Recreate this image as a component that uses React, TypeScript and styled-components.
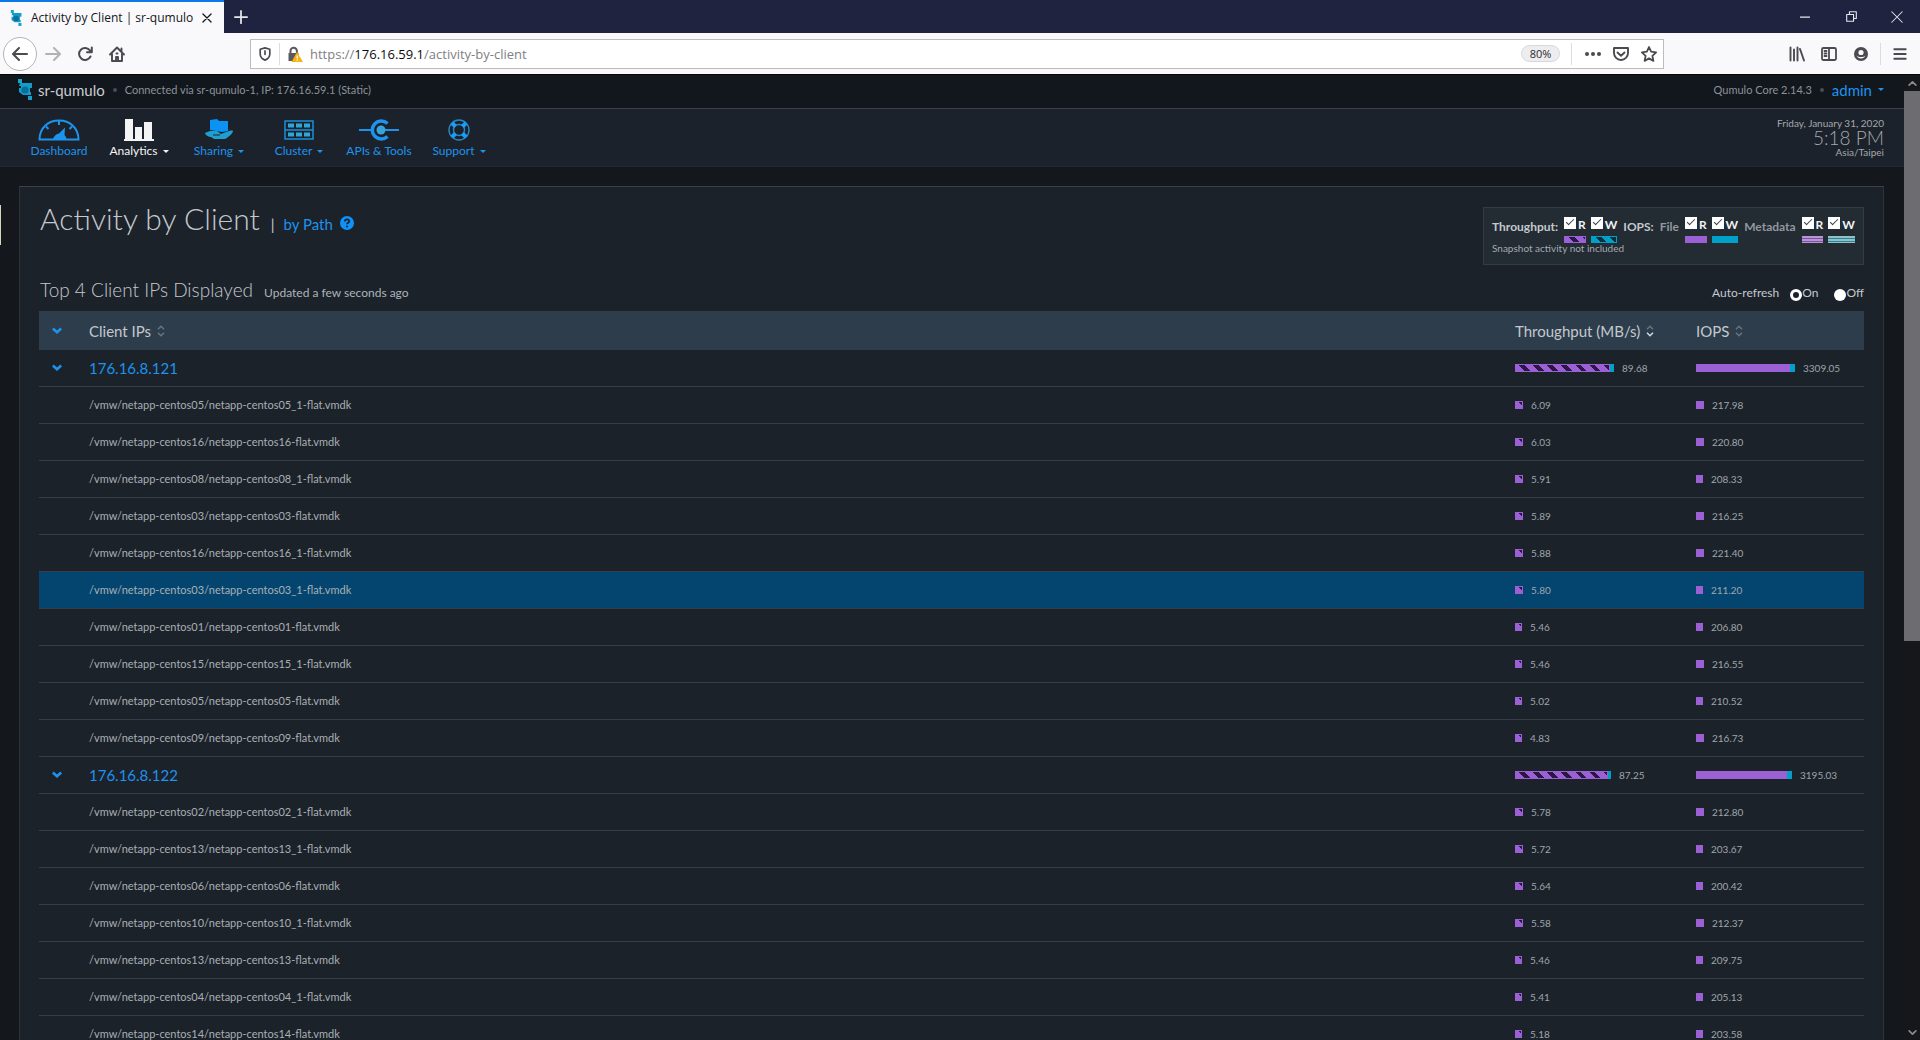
import React from "react";
import styled, { createGlobalStyle, css } from "styled-components";

const color = {
  blue: "#1c93ee",
  purple: "#9a60d4",
  purpleDark: "#2b1746",
  cyan: "#00a0c8",
  cyanDark: "#06303e",
  text: "#c3c9ce",
  muted: "#8b9298",
  panel: "#1c222a",
  line: "#363d46",
};

const GlobalStyle = createGlobalStyle`
  *, *::before, *::after { box-sizing: border-box; }
  body { margin: 0; background: #14171b; }
  button { font: inherit; color: inherit; background: none; border: 0; padding: 0; cursor: pointer; }
  a { text-decoration: none; }
  svg { display: block; flex: none; }
`;

const Window = styled.div`
  display: flex;
  flex-direction: column;
  height: 100vh;
  overflow: hidden;
  font-family: "Open Sans", "Noto Sans", sans-serif;
`;

/* ---------- Browser chrome ---------- */

const TabStrip = styled.div`
  display: flex;
  align-items: stretch;
  flex: none;
  height: 33px;
  background: #202340;
  color: #e6e6ee;
`;

const Tab = styled.div`
  display: flex;
  align-items: center;
  width: 224px;
  padding: 0 12px 0 10px;
  gap: 8px;
  border-top: 2px solid #0a78e6;
  background: #f9f9fb;
  color: #15151a;
  font-size: 12px;
  white-space: nowrap;
`;

const TabTitle = styled.span`
  flex: 1;
`;

const NewTab = styled.button`
  display: grid;
  place-items: center;
  width: 34px;
`;

const WindowButtons = styled.div`
  display: flex;
  margin-left: auto;
`;

const WindowButton = styled.button`
  display: grid;
  place-items: center;
  width: 46px;
`;

const Toolbar = styled.div`
  display: flex;
  align-items: center;
  flex: none;
  height: 42px;
  padding: 0 4px 0 3px;
  background: #f9f9fb;
  border-bottom: 1px solid #050608;
  color: #4a4a4f;
`;

const NavButtons = styled.div`
  display: flex;
  align-items: center;
  width: 247px;
`;

const BackButton = styled.button`
  display: grid;
  place-items: center;
  width: 34px;
  height: 34px;
  border: 1px solid #b4b4b8;
  border-radius: 50%;
  background: #fff;
`;

const ToolButton = styled.button<{ $dim?: boolean }>`
  display: grid;
  place-items: center;
  width: 32px;
  height: 32px;
  opacity: ${(p) => (p.$dim ? 0.4 : 1)};
`;

const UrlBar = styled.div`
  display: flex;
  align-items: center;
  flex: 1;
  height: 30px;
  padding: 0 0 0 7px;
  border: 1px solid #bcbcc0;
  background: #fff;
`;

const UrlText = styled.div`
  flex: 1;
  padding-left: 7px;
  font-size: 13px;
  color: #808085;
  b {
    font-weight: 400;
    color: #0c0c0d;
  }
`;

const Divider = styled.span<{ $gap?: number }>`
  width: 1px;
  height: 22px;
  margin: 0 ${(p) => p.$gap ?? 8}px;
  background: #dcdce0;
`;

const ZoomPill = styled.button`
  width: 39px;
  height: 17px;
  margin-right: 4px;
  border: 1px solid #d8d8dc;
  border-radius: 9px;
  background: #ededf0;
  color: #2a2a2e;
  font-size: 11px;
  line-height: 15px;
`;

const UrlAction = styled.button`
  display: grid;
  place-items: center;
  width: 28px;
  height: 28px;
`;

const ToolbarEnd = styled.div`
  display: flex;
  align-items: center;
  padding-left: 117px;
`;

/* ---------- Page ---------- */

const Viewport = styled.div`
  display: flex;
  flex: 1;
  min-height: 0;
  font-family: Lato, "Noto Sans", sans-serif;
  color: ${color.text};
`;

const Page = styled.div`
  flex: 1;
  min-width: 0;
  overflow: hidden;
  background: #14171b;
`;

const ScrollTrack = styled.div`
  display: flex;
  flex-direction: column;
  align-items: center;
  justify-content: space-between;
  width: 16px;
  background: #15171b;
  color: #8a8a8e;
`;

const ScrollThumb = styled.div`
  flex: none;
  width: 100%;
  height: 57%;
  margin-bottom: auto;
  background: #6d6d71;
`;

const ScrollArrow = styled.button`
  display: grid;
  place-items: center;
  flex: none;
  width: 16px;
  height: 16px;
`;

const StatusBar = styled.header`
  display: flex;
  align-items: center;
  height: 34px;
  padding: 0 20px 4px 18px;
  border-bottom: 1px solid #3c424d;
  background: #12171d;
  font-size: 11px;
  color: ${color.muted};
`;

const ClusterName = styled.span`
  padding-left: 5px;
  font-size: 15px;
  color: #c9ccd0;
`;

const Dot = styled.i`
  width: 4px;
  height: 4px;
  margin: 0 8px;
  border-radius: 50%;
  background: #474d54;
`;

const AdminLink = styled.a`
  display: flex;
  align-items: center;
  gap: 6px;
  color: ${color.blue};
  font-size: 15px;
`;

const Spacer = styled.span`
  flex: 1;
`;

const Caret = styled.i`
  border: 3px solid transparent;
  border-top-color: currentColor;
  border-bottom: 0;
`;

const MainNav = styled.nav`
  display: flex;
  justify-content: space-between;
  height: 58px;
  padding: 8px 20px 0 19px;
  border-bottom: 1px solid #23282f;
  background: #1c222b;
`;

const NavItems = styled.div`
  display: flex;
  padding-top: 2px;
`;

const NavItem = styled.a<{ $active?: boolean }>`
  display: flex;
  flex-direction: column;
  align-items: center;
  width: 80px;
  gap: 2px;
  font-size: 12px;
  line-height: 16px;
  white-space: nowrap;
  color: ${(p) => (p.$active ? "#f4f4f4" : color.blue)};
`;

const NavLabel = styled.span`
  display: flex;
  align-items: center;
  gap: 5px;
`;

const Clock = styled.div`
  text-align: right;
  font-size: 10px;
  line-height: 12px;
  color: #a4a8ac;
`;

const Time = styled.div`
  font-size: 19px;
  line-height: 17px;
  font-weight: 300;
`;

const Content = styled.div`
  position: relative;
  padding: 19px 20px 0 19px;
`;

const EdgeTab = styled.span`
  position: absolute;
  left: 0;
  top: 38px;
  width: 1px;
  height: 40px;
  background: #d6d6bc;
`;

const Panel = styled.main`
  padding: 20px 19px 0;
  border: 1px solid #2d333b;
  border-top-color: #3a414a;
  background: ${color.panel};
`;

const PanelTop = styled.div`
  display: flex;
  justify-content: space-between;
  align-items: flex-start;
`;

const TitleRow = styled.div`
  display: flex;
  align-items: baseline;
  height: 72px;
  padding-left: 1px;
  font-size: 15px;
`;

const Title = styled.h1`
  margin: 0;
  font-size: 30px;
  line-height: 22px;
  font-weight: 300;
`;

const TitleBar = styled.span`
  margin: 0 9px 0 11px;
`;

const PathLink = styled.a`
  color: ${color.blue};
`;

const HelpButton = styled.button`
  align-self: flex-start;
  margin: 9px 0 0 7px;
`;

const Legend = styled.div`
  width: 381px;
  height: 58px;
  padding: 9px 8px 0;
  border: 1px solid #333b44;
  background: #232b33;
  font-size: 12px;
  font-weight: 700;
`;

const LegendRow = styled.div`
  display: flex;
  justify-content: space-between;
  height: 26px;
`;

const LegendText = styled.span<{ $dim?: boolean }>`
  line-height: 20px;
  color: ${(p) => (p.$dim ? "#9298a0" : "#c3c9ce")};
`;

const LegendPair = styled.div`
  display: flex;
  gap: 5px;
`;

const SwatchItem = styled.label`
  display: grid;
  grid-template-columns: auto auto;
  grid-template-rows: 19px 7px;
  justify-content: space-between;
  column-gap: 2px;
  color: #f2f4f5;
  line-height: 16px;
`;

const Check = styled.input`
  appearance: none;
  width: 12px;
  height: 12px;
  margin: 0;
  background: #fff;
  &:checked::after {
    content: "";
    display: block;
    width: 8px;
    height: 4px;
    margin: 2px;
    border: solid #3a3f44;
    border-width: 0 0 1px 1px;
    transform: rotate(-45deg);
  }
`;

type SwatchKind = "stripeR" | "stripeW" | "solidR" | "solidW" | "lineR" | "lineW";

const striped = (base: string, dark: string) => css`
  border: 1px solid ${base};
  background: repeating-linear-gradient(
    45deg,
    ${base} 0 6px,
    ${dark} 6px 10px
  );
`;

const lined = (base: string, light: string) => css`
  background: repeating-linear-gradient(${light} 0 2px, ${base} 2px 3px);
`;

const swatchStyles = {
  stripeR: striped(color.purple, color.purpleDark),
  stripeW: striped(color.cyan, color.cyanDark),
  solidR: css`background: ${color.purple};`,
  solidW: css`background: ${color.cyan};`,
  lineR: lined("#7f4fb0", "#b795cf"),
  lineW: lined("#2c8494", "#8fc0c8"),
};

const Swatch = styled.span<{ $kind: SwatchKind }>`
  grid-column: 1 / -1;
  ${(p) => swatchStyles[p.$kind]}
`;

const LegendNote = styled.div`
  font-size: 10px;
  line-height: 10px;
  font-weight: 400;
  color: #a4aab0;
`;

const SubHeader = styled.div`
  display: flex;
  align-items: baseline;
  height: 32px;
  padding-left: 1px;
  font-size: 12px;
`;

const SubTitle = styled.h2`
  margin: 0;
  font-size: 19px;
  line-height: 22px;
  font-weight: 300;
`;

const Updated = styled.span`
  padding-left: 11px;
  color: #aeb4b9;
`;

const RadioGroup = styled.fieldset`
  display: flex;
  align-items: baseline;
  gap: 16px;
  margin: 0 0 0 auto;
  padding: 0;
  border: 0;
`;

const RadioLabel = styled.label`
  line-height: 16px;
`;

const RadioCaption = styled.span`
  margin-right: -5px;
`;

const Radio = styled.input`
  appearance: none;
  width: 12px;
  height: 12px;
  margin: 0;
  vertical-align: -4px;
  border-radius: 50%;
  background: #fff;
  &:checked {
    border: 3px solid #fff;
    background: ${color.panel};
  }
`;

const Table = styled.table`
  width: 100%;
  table-layout: fixed;
  border-collapse: separate;
  border-spacing: 0;
`;

const HeadCell = styled.th`
  height: 39px;
  padding: 0;
  background: #2d3d4b;
  text-align: left;
  font-size: 15px;
  font-weight: 400;
`;

const SortButton = styled.button`
  display: flex;
  align-items: center;
  gap: 6px;
`;

const Row = styled.tr<{ $active?: boolean }>`
  background: ${(p) => (p.$active ? "#04456f" : "transparent")};
`;

const Cell = styled.td`
  height: 37px;
  padding: 0 0 1px;
  border-bottom: 1px solid ${color.line};
  font-size: 11px;
  color: #a9afb4;
`;

const ExpandButton = styled.button`
  display: block;
  margin-left: 13px;
  color: ${color.blue};
`;

const IpLink = styled.a`
  font-size: 15px;
  line-height: 18px;
  color: ${color.blue};
`;

const Meter = styled.div`
  display: flex;
  align-items: center;
  font-size: 10px;
`;

const MeterPart = styled.span<{ $kind: SwatchKind }>`
  height: 8px;
  ${(p) => swatchStyles[p.$kind]}
`;

const MeterValue = styled.span`
  padding-left: 8px;
  color: #9fa6ab;
`;

/* ---------- Icons ---------- */

const Logo = ({ w, h }: { w: number; h: number }) => (
  <svg width={w} height={h} viewBox="0 0 15 21">
    <path d="M0 0h4v4H0z" fill="#19a5c8" />
    <path d="M2 4h12v5h-2v4h1v3H5l-4-3V9h2V7H1z" fill="#149cc8" />
    <circle cx="7" cy="11" r="3.600" fill="#0a6f9a" />
    <path d="M10 17h4v4h-4z" fill="#17a0cc" />
  </svg>
);

const Stroke = ({ size = 16, d, w = 2, children }: { size?: number; d: string; w?: number; children?: React.ReactNode }) => (
  <svg width={size} height={size} viewBox="0 0 16 16" fill="none" stroke="currentColor" strokeWidth={w} strokeLinecap="round" strokeLinejoin="round">
    <path d={d} />
    {children}
  </svg>
);

const Chevron = () => (
  <svg width="10" height="8" viewBox="0 0 10 8" fill="none" stroke="currentColor" strokeWidth="2.600">
    <path d="M0.800 1.500L5 5.300L9.200 1.500" />
  </svg>
);

const SortIcon = ({ desc }: { desc?: boolean }) => (
  <svg width="8" height="12" viewBox="0 0 8 12" fill="none" strokeWidth="1.500">
    <path d="M1 4.200L4 1.200L7 4.200" stroke="#66747f" />
    <path d="M1 7.800L4 10.800L7 7.800" stroke={desc ? "#d5dbe0" : "#66747f"} />
  </svg>
);

const DashboardIcon = () => (
  <svg width="42" height="22" viewBox="0 0 42 22" fill="none" stroke="currentColor">
    <path d="M1.500 20.500C1.500 9 10 1.500 21 1.500S40.500 9 40.500 20.500z" strokeWidth="2" />
    <path d="M21 2v4M8 7.500l2.500 2.500M34 7.500l-2.500 2.500" strokeWidth="2" />
    <path d="M15 21c0-3 3-6 6-6.500L27 8.500L26.500 16c1.500 1.500 2 3 2 5z" fill="currentColor" stroke="none" />
  </svg>
);

const AnalyticsIcon = () => (
  <svg width="30" height="22" viewBox="0 0 30 22" fill="currentColor">
    <path d="M1 0h8v20H1zM11 8h7v12h-7zM20 3h8v17h-8zM0 20h30v2H0z" />
  </svg>
);

const SharingIcon = () => (
  <svg width="28" height="22" viewBox="0 0 28 22">
    <path d="M5 1l7-1l2 2h9v10l-6 1l-12-2z" fill="#0a93f5" />
    <path d="M0 14l5-2h7l4 3l5-2c3-1 6-2 7-1c0 2-4 6-8 8H9l-3-2c-2 0-6-2-6-4z" fill="#1f9fd0" />
    <path d="M8 16h7" stroke="#1c222b" strokeWidth="1" />
  </svg>
);

const ClusterIcon = () => (
  <svg width="30" height="22" viewBox="0 0 30 22" fill="none" stroke="#1690dd" strokeWidth="1.500">
    <path d="M1 2h28v18H1zM1 11h28" />
    <path d="M4 6.500h6M12 6.500h6M20 6.500h6M4 15.500h6M12 15.500h6M20 15.500h6" stroke="#2fa6d6" strokeWidth="4" />
  </svg>
);

const ApiIcon = () => (
  <svg width="40" height="22" viewBox="0 0 40 22" fill="none" stroke="currentColor">
    <path d="M0 11h12M26 11h14" strokeWidth="2" />
    <path d="M28.500 4.500A9 9 0 1 0 28.500 17.500" strokeWidth="3.500" />
    <circle cx="22" cy="11" r="4.500" fill="#37a4dc" stroke="none" />
  </svg>
);

const SupportIcon = () => (
  <svg width="22" height="22" viewBox="0 0 22 22" fill="none" stroke="#2389c4">
    <circle cx="11" cy="11" r="10" strokeWidth="1.400" />
    <circle cx="11" cy="11" r="5.500" strokeWidth="1.400" />
    <path d="M4 4l3.500 3.500M18 4l-3.500 3.500M4 18l3.500-3.500M18 18l-3.500-3.500" stroke="#1d9bf5" strokeWidth="4" />
  </svg>
);

const HelpIcon = () => (
  <svg width="14" height="14" viewBox="0 0 14 14">
    <circle cx="7" cy="7" r="7" fill="#0f92f7" />
    <path d="M4.800 5.600c0-3 4.600-2.800 4.400-.2C9.100 6.800 7 6.700 7 8.300" fill="none" stroke={color.panel} strokeWidth="1.700" />
    <circle cx="7" cy="10.600" r="1" fill={color.panel} />
  </svg>
);

/* ---------- Data ---------- */

type FileRow = [path: string, throughput: number, iops: number];

const clients: { ip: string; mb: number; mbW: number; iops: number; iopsW: number; files: FileRow[] }[] = [
  {
    ip: "176.16.8.121", mb: 89.68, mbW: 4, iops: 3309.05, iopsW: 5,
    files: [
      ["/vmw/netapp-centos05/netapp-centos05_1-flat.vmdk", 6.09, 217.98],
      ["/vmw/netapp-centos16/netapp-centos16-flat.vmdk", 6.03, 220.8],
      ["/vmw/netapp-centos08/netapp-centos08_1-flat.vmdk", 5.91, 208.33],
      ["/vmw/netapp-centos03/netapp-centos03-flat.vmdk", 5.89, 216.25],
      ["/vmw/netapp-centos16/netapp-centos16_1-flat.vmdk", 5.88, 221.4],
      ["/vmw/netapp-centos03/netapp-centos03_1-flat.vmdk", 5.8, 211.2],
      ["/vmw/netapp-centos01/netapp-centos01-flat.vmdk", 5.46, 206.8],
      ["/vmw/netapp-centos15/netapp-centos15_1-flat.vmdk", 5.46, 216.55],
      ["/vmw/netapp-centos05/netapp-centos05-flat.vmdk", 5.02, 210.52],
      ["/vmw/netapp-centos09/netapp-centos09-flat.vmdk", 4.83, 216.73],
    ],
  },
  {
    ip: "176.16.8.122", mb: 87.25, mbW: 3, iops: 3195.03, iopsW: 5,
    files: [
      ["/vmw/netapp-centos02/netapp-centos02_1-flat.vmdk", 5.78, 212.8],
      ["/vmw/netapp-centos13/netapp-centos13_1-flat.vmdk", 5.72, 203.67],
      ["/vmw/netapp-centos06/netapp-centos06-flat.vmdk", 5.64, 200.42],
      ["/vmw/netapp-centos10/netapp-centos10_1-flat.vmdk", 5.58, 212.37],
      ["/vmw/netapp-centos13/netapp-centos13-flat.vmdk", 5.46, 209.75],
      ["/vmw/netapp-centos04/netapp-centos04_1-flat.vmdk", 5.41, 205.13],
      ["/vmw/netapp-centos14/netapp-centos14-flat.vmdk", 5.18, 203.58],
    ],
  },
];

const BAR_WIDTH = 99;
const MAX_MB = 89.68;
const MAX_IOPS = 3309.05;

const Bar = ({ value, max, write = 0, kind }: { value: number; max: number; write?: number; kind: SwatchKind }) => {
  const width = Math.max(Math.round((value / max) * BAR_WIDTH), value > 5.5 && (value < 10 || value > 212) ? 8 : 7);
  return (
    <Meter>
      <MeterPart $kind={kind} style={{ width: width - write }} />
      {write > 0 && <MeterPart $kind="solidW" style={{ width: write }} />}
      <MeterValue>{value.toFixed(2)}</MeterValue>
    </Meter>
  );
};

const LegendSwatch = ({ letter, kind, name }: { letter: string; kind: SwatchKind; name: string }) => (
  <SwatchItem>
    <Check type="checkbox" defaultChecked aria-label={name} />
    {letter}
    <Swatch $kind={kind} />
  </SwatchItem>
);

const navItems = [
  { label: "Dashboard", icon: <DashboardIcon /> },
  { label: "Analytics", icon: <AnalyticsIcon />, menu: true, active: true },
  { label: "Sharing", icon: <SharingIcon />, menu: true },
  { label: "Cluster", icon: <ClusterIcon />, menu: true },
  { label: "APIs & Tools", icon: <ApiIcon /> },
  { label: "Support", icon: <SupportIcon />, menu: true },
];

const BrowserChrome = () => (
  <>
    <TabStrip>
      <Tab>
        <Logo w={13} h={16} />
        <TabTitle>Activity by Client | sr-qumulo</TabTitle>
        <button aria-label="Close tab">
          <Stroke size={10} w={2} d="M1.500 1.500L14.500 14.500M14.500 1.500L1.500 14.500" />
        </button>
      </Tab>
      <NewTab aria-label="New tab">
        <Stroke size={14} w={2} d="M8 1v14M1 8h14" />
      </NewTab>
      <WindowButtons>
        <WindowButton aria-label="Minimize">
          <Stroke size={10} w={2} d="M0 8h16" />
        </WindowButton>
        <WindowButton aria-label="Restore">
          <Stroke size={11} w={1.6} d="M1 5h10v10H1zM5 4.500V1h10v10h-3.500" />
        </WindowButton>
        <WindowButton aria-label="Close">
          <Stroke size={12} w={1.4} d="M1 1L15 15M15 1L1 15" />
        </WindowButton>
      </WindowButtons>
    </TabStrip>
    <Toolbar>
      <NavButtons>
        <BackButton aria-label="Back">
          <Stroke d="M15 8H1.500M7 2L1 8l6 6" />
        </BackButton>
        <ToolButton $dim aria-label="Forward">
          <Stroke d="M1 8h13.500M9 2l6 6l-6 6" />
        </ToolButton>
        <ToolButton aria-label="Reload">
          <Stroke d="M13.500 10.500A6 6 0 1 1 13 4.500L14.500 6M14.800 1.500V6.300H10" />
        </ToolButton>
        <ToolButton aria-label="Home">
          <Stroke d="M1 8.500L8 1.500l7 7M3 8v7h10V8M12.500 2.500v3" w={1.9}>
            <path d="M7 15v-4h2v4M7.500 7.500h1" />
          </Stroke>
        </ToolButton>
      </NavButtons>
      <UrlBar>
        <Stroke size={14} w={1.9} d="M2.500 2.500L8 1l5.500 1.500V8c0 3.500-3 6-5.500 7c-2.500-1-5.500-3.500-5.500-7zM8 4.500V8.500" />
        <Divider $gap={7} />
        <svg width="16" height="16" viewBox="0 0 16 16">
          <path d="M3.500 7V5a3.200 3.200 0 0 1 6.400 0v2" fill="none" stroke="#5a5a5e" strokeWidth="2" />
          <path d="M1.500 7h10v8h-10z" fill="#5a5a5e" />
          <path d="M10 6l6 10H4.500z" fill="#f6b413" />
          <path d="M10.200 9.500v3M10.200 13.500v1.200" stroke="#fff" strokeWidth="1.200" />
        </svg>
        <UrlText>
          https://<b>176.16.59.1</b>/activity-by-client
        </UrlText>
        <ZoomPill>80%</ZoomPill>
        <Divider $gap={7} />
        <UrlAction aria-label="Page actions">
          <svg width="16" height="16" viewBox="0 0 16 16" fill="currentColor">
            <circle cx="2" cy="8" r="2" />
            <circle cx="8" cy="8" r="2" />
            <circle cx="14" cy="8" r="2" />
          </svg>
        </UrlAction>
        <UrlAction aria-label="Save to Pocket">
          <Stroke w={1.9} d="M1 2h14v5a7 7 0 0 1-14 0zM4.500 6.500L8 9.800l3.500-3.300" />
        </UrlAction>
        <UrlAction aria-label="Bookmark this page">
          <Stroke w={1.8} d="M8 1l2.100 4.700l5 .6l-3.700 3.500l1 5.100L8 12.400l-4.400 2.500l1-5.100L.900 6.300l5-.6z" />
        </UrlAction>
      </UrlBar>
      <ToolbarEnd>
        <ToolButton aria-label="Library">
          <Stroke w={1.9} d="M1.500 1.500v13M5 3.500v11M8.500 1.500v13M11 3l4 11.500" />
        </ToolButton>
        <ToolButton aria-label="Sidebars">
          <Stroke w={1.8} d="M2.500 2h11a1.500 1.500 0 0 1 1.500 1.500v9a1.500 1.500 0 0 1-1.500 1.500h-11A1.500 1.500 0 0 1 1 12.500v-9A1.500 1.500 0 0 1 2.500 2zM8 2v12M3.500 5h2M3.500 7.500h2M3.500 10h2" />
        </ToolButton>
        <ToolButton aria-label="Account">
          <svg width="14" height="14" viewBox="0 0 14 14">
            <circle cx="7" cy="7" r="7" fill="currentColor" />
            <circle cx="7" cy="5.500" r="2.600" fill="#f9f9fb" />
            <path d="M2.500 8.500c1.500 4 7.500 4 9 0c-2 2-7 2-9 0z" fill="#f9f9fb" />
          </svg>
        </ToolButton>
        <Divider $gap={3} />
        <ToolButton aria-label="Menu">
          <Stroke size={14} w={2.2} d="M1.500 2.500h13M1.500 8h13M1.500 13.500h13" />
        </ToolButton>
      </ToolbarEnd>
    </Toolbar>
  </>
);

const ClientTable = () => (
  <Table>
    <colgroup>
      <col style={{ width: 50 }} />
      <col />
      <col style={{ width: 181 }} />
      <col style={{ width: 168 }} />
    </colgroup>
    <thead>
      <tr>
        <HeadCell>
          <ExpandButton aria-label="Collapse all"><Chevron /></ExpandButton>
        </HeadCell>
        <HeadCell><SortButton>Client IPs <SortIcon /></SortButton></HeadCell>
        <HeadCell><SortButton>Throughput (MB/s) <SortIcon desc /></SortButton></HeadCell>
        <HeadCell><SortButton>IOPS <SortIcon /></SortButton></HeadCell>
      </tr>
    </thead>
    <tbody>
      {clients.map((c) => (
        <React.Fragment key={c.ip}>
          <Row>
            <Cell><ExpandButton aria-label={`Collapse ${c.ip}`}><Chevron /></ExpandButton></Cell>
            <Cell><IpLink href="#">{c.ip}</IpLink></Cell>
            <Cell><Bar value={c.mb} max={MAX_MB} write={c.mbW} kind="stripeR" /></Cell>
            <Cell><Bar value={c.iops} max={MAX_IOPS} write={c.iopsW} kind="solidR" /></Cell>
          </Row>
          {c.files.map(([path, mb, iops]) => (
            <Row key={path} $active={mb === 5.8}>
              <Cell />
              <Cell>{path}</Cell>
              <Cell><Bar value={mb} max={MAX_MB} kind="stripeR" /></Cell>
              <Cell><Bar value={iops} max={MAX_IOPS} kind="solidR" /></Cell>
            </Row>
          ))}
        </React.Fragment>
      ))}
    </tbody>
  </Table>
);

export default function App() {
  return (
    <Window>
      <GlobalStyle />
      <BrowserChrome />
      <Viewport>
        <Page>
          <StatusBar>
            <Logo w={15} h={21} />
            <ClusterName>sr-qumulo</ClusterName>
            <Dot />
            <span>Connected via sr-qumulo-1, IP: 176.16.59.1 (Static)</span>
            <Spacer />
            <span>Qumulo Core 2.14.3</span>
            <Dot />
            <AdminLink href="#">admin <Caret /></AdminLink>
          </StatusBar>
          <MainNav>
            <NavItems>
              {navItems.map((n) => (
                <NavItem key={n.label} href="#" $active={n.active}>
                  {n.icon}
                  <NavLabel>{n.label}{n.menu && <Caret />}</NavLabel>
                </NavItem>
              ))}
            </NavItems>
            <Clock>
              <div>Friday, January 31, 2020</div>
              <Time>5:18 PM</Time>
              <div>Asia/Taipei</div>
            </Clock>
          </MainNav>
          <Content>
            <EdgeTab />
            <Panel>
              <PanelTop>
                <TitleRow>
                  <Title>Activity by Client</Title>
                  <TitleBar>|</TitleBar>
                  <PathLink href="#">by Path</PathLink>
                  <HelpButton aria-label="Help"><HelpIcon /></HelpButton>
                </TitleRow>
                <Legend>
                  <LegendRow>
                    <LegendText>Throughput:</LegendText>
                    <LegendPair>
                      <LegendSwatch letter="R" kind="stripeR" name="Throughput read" />
                      <LegendSwatch letter="W" kind="stripeW" name="Throughput write" />
                    </LegendPair>
                    <LegendText>IOPS:</LegendText>
                    <LegendText $dim>File</LegendText>
                    <LegendPair>
                      <LegendSwatch letter="R" kind="solidR" name="File read" />
                      <LegendSwatch letter="W" kind="solidW" name="File write" />
                    </LegendPair>
                    <LegendText $dim>Metadata</LegendText>
                    <LegendPair>
                      <LegendSwatch letter="R" kind="lineR" name="Metadata read" />
                      <LegendSwatch letter="W" kind="lineW" name="Metadata write" />
                    </LegendPair>
                  </LegendRow>
                  <LegendNote>Snapshot activity not included</LegendNote>
                </Legend>
              </PanelTop>
              <SubHeader>
                <SubTitle>Top 4 Client IPs Displayed</SubTitle>
                <Updated>Updated a few seconds ago</Updated>
                <RadioGroup>
                  <RadioCaption>Auto-refresh</RadioCaption>
                  <RadioLabel><Radio type="radio" name="refresh" defaultChecked />On</RadioLabel>
                  <RadioLabel><Radio type="radio" name="refresh" />Off</RadioLabel>
                </RadioGroup>
              </SubHeader>
              <ClientTable />
            </Panel>
          </Content>
        </Page>
        <ScrollTrack>
          <ScrollArrow aria-label="Scroll up">
            <Stroke size={9} w={3} d="M2 11l6-6l6 6" />
          </ScrollArrow>
          <ScrollThumb />
          <ScrollArrow aria-label="Scroll down">
            <Stroke size={9} w={3} d="M2 5l6 6l6-6" />
          </ScrollArrow>
        </ScrollTrack>
      </Viewport>
    </Window>
  );
}
